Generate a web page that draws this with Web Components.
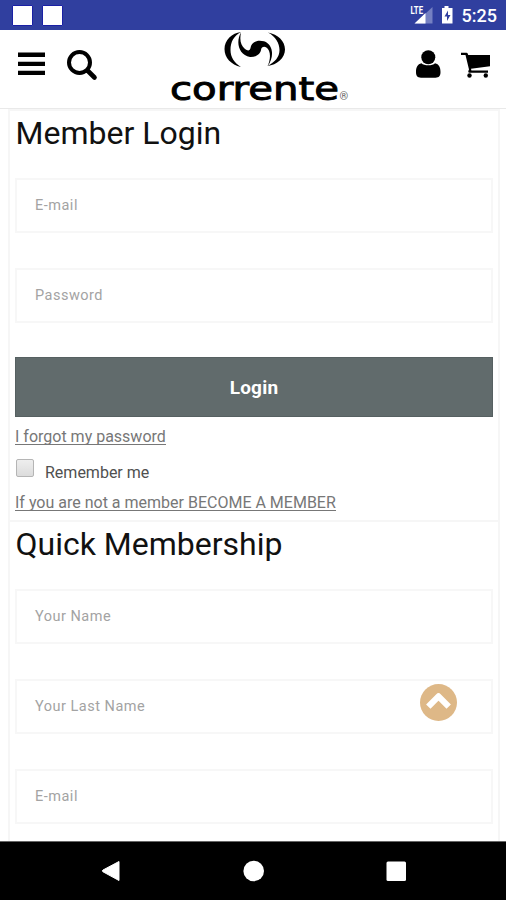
<!DOCTYPE html>
<html lang="en">
<head>
<meta charset="utf-8">
<title>Corrente – Member Login</title>
<style>
html,body{margin:0;height:100%;overflow:hidden;background:#fff;font-family:Roboto,"Liberation Sans",sans-serif}
</style>
</head>
<body>
<corrente-app></corrente-app>
<script>
const define = (name, html, setup) => customElements.define(name, class extends HTMLElement {
  connectedCallback() {
    if (this.shadowRoot) return;
    const t = document.createElement('template');
    t.innerHTML = html;
    this.attachShadow({ mode: 'open' }).append(t.content.cloneNode(true));
    if (setup) setup(this, this.shadowRoot);
  }
});

define('status-bar', `
<style>
:host{display:flex;box-sizing:border-box;height:30px;flex:none;background:#303f9f;color:#fff;align-items:center;padding:0 9px 0 12px}
.note{width:21px;height:21px;box-sizing:border-box;border:1px solid #1a20a5;background:#fff;margin-right:9px;border-radius:1px}
.gap{flex:1}
.clock{font-size:18px;font-weight:500;line-height:32px;height:30px}
svg{display:block;flex:none}
</style>
<span class="note"></span><span class="note"></span><span class="gap"></span>
<svg width="52" height="30" viewBox="0 0 52 30">
<path d="M22.500 7V23.500H5Z" fill="#7580c2"/><path d="M15.500 13V23.500H4.500Z" fill="#fff"/>
<text x="0.500" y="14" font-family="Roboto,sans-serif" font-size="10" font-weight="700" fill="#fff" textLength="12.500" lengthAdjust="spacingAndGlyphs">LTE</text>
<path d="M34.500 6h4v2h4v15.500H32V8h2.500Z" fill="#fff"/><path d="M38 10.500l-3.500 6h2.500v4.500l3.500-6h-2.500Z" fill="#303f9f"/>
</svg>
<span class="clock">5:25</span>`);

define('brand-logo', `
<style>:host{display:block;width:182px;height:76px}svg{display:block;overflow:visible}</style>
<svg width="182" height="78" viewBox="168 30 182 78">
<path d="M241 32C232 33 224.500 40 224.500 49C224.500 58 231 64.500 241 67C234 62.500 230.500 57 230.500 50C230.500 41.500 234 36 241 32Z"/>
<path d="M268 32.500C275.500 36.500 279.500 43 279.500 50C279.500 57 275 62 267.500 66C277 65 285 58 285 49.500C285 41 278 34.500 268 32.500Z"/>
<path d="M241 32.500C235.500 42 238.500 55 250 57C256.500 57.300 260.500 53.500 261 50C261.300 47 264 46 266 47.300C271 50 271 59 267.500 66.500C274.500 57 273.500 44.500 264 41.300C256 39 251 43.500 250.500 48C250 51 247.500 51 245 49C240.500 45 239.500 40 241 32.500Z"/>
<text x="170" y="100" font-family="'DejaVu Sans',sans-serif" font-size="31.500" stroke="#000" stroke-width=".9" textLength="169" lengthAdjust="spacingAndGlyphs">corrente</text>
<text x="339.500" y="100" font-family="Roboto,sans-serif" font-size="11" fill="#666">®</text>
</svg>`);

define('site-header', `
<style>
:host{display:flex;box-sizing:border-box;height:79px;flex:none;border-bottom:1px solid #e9e9e9;background:#fff;justify-content:space-between}
svg{display:block}
</style>
<svg width="110" height="76" viewBox="0 30 110 76">
<path d="M18 52.600h27v4.300H18zM18 61.700h27v4.300H18zM18 70.700h27v4.300H18z"/>
<circle cx="79.500" cy="62.500" r="10.500" fill="none" stroke="#000" stroke-width="4"/>
<path d="M87.500 70.500L94.500 77.500" stroke="#000" stroke-width="4.600" stroke-linecap="round"/>
</svg>
<brand-logo style="margin-left:58px"></brand-logo>
<svg width="106" height="76" viewBox="400 30 106 76" style="margin-left:50px">
<circle cx="428.300" cy="57.300" r="7"/><path d="M421.500 63.300C424 66 432.500 66 435 63.300C439 64 440.500 67.500 440.500 72C440.500 76 439 77.700 435.500 77.700H421C417.500 77.700 416 76 416 72C416 67.500 417.500 64 421.500 63.300Z"/>
<path d="M461 52.700h5.500c1.200 0 1.400 1 1.700 2.300H490v11.200L471 68.700l.4 1.800H488v2.300H469.500c-1.600-.1-1.500-1.300-.5-3.300L465.500 55H461Z"/>
<circle cx="469.500" cy="75.500" r="2.200"/><circle cx="485.800" cy="75.500" r="2.200"/>
</svg>`);

define('form-panel', `
<style>
:host{display:block;box-sizing:border-box;margin:0 6px 0 8px;border:solid #f6f6f6;border-width:2px 2px 0;padding:0 5px}
h2{margin:0;height:67px;line-height:45px;font-size:32px;font-weight:400;color:#111;white-space:nowrap;padding-left:.5px}
</style>
<h2></h2><slot></slot>`, (el, root) => {
  root.querySelector('h2').textContent = el.getAttribute('heading');
});

define('text-field', `
<style>
:host{display:block;box-sizing:border-box;height:55px;margin-bottom:35px;border:2px solid #f7f7f7;padding:0 18px;color:#a3a3a3;font-size:14.500px;line-height:52px;letter-spacing:.5px}
</style><slot></slot>`);

define('submit-button', `
<style>
:host{display:flex;box-sizing:border-box;height:60px;margin-top:-1px;align-items:center;justify-content:center;background:#616b6c;border:1px solid #566061;color:#fff;font-size:19px;font-weight:700;letter-spacing:.2px}
</style><slot></slot>`);

define('text-link', `
<style>
:host{display:block;color:#777;font-size:16px;line-height:20px;white-space:nowrap}
span{display:inline-block;height:18px;line-height:19px;border-bottom:1px solid #777;box-sizing:border-box}
</style><span><slot></slot></span>`);

define('check-row', `
<style>
:host{display:flex;height:30px;color:#505050;font-size:16px;line-height:38px}
i{box-sizing:border-box;width:18px;height:18px;margin:5px 11px 0 1px;border:1px solid #b5b5b5;border-radius:2px;background:linear-gradient(#eee,#dcdcdc)}
</style><i></i><span><slot></slot></span>`);

define('scroll-top', `
<style>:host{position:absolute;left:420px;top:684px;width:37px;height:37px}svg{display:block}</style>
<svg width="37" height="37" viewBox="0 0 37 37"><circle cx="18.500" cy="18.500" r="18.500" fill="#deb887"/><path d="M8.300 22.600L18.500 12.400L28.700 22.600" fill="none" stroke="#fff" stroke-width="6.200" stroke-linejoin="round"/></svg>`);

define('nav-bar', `
<style>:host{display:block;height:59px;flex:none;background:#000;box-sizing:border-box;border-top:1px solid #666}svg{display:block}</style>
<svg width="506" height="58" viewBox="0 842 506 58" fill="#fff"><path d="M119 861.500V880.500L103 871.800Q101.500 871 103 870Z" stroke="#fff" stroke-linejoin="round"/><circle cx="253.700" cy="871" r="10.300"/><rect x="386.500" y="861.500" width="19.500" height="19.500" rx="1.500"/></svg>`);

define('corrente-app', `
<style>
:host{display:flex;flex-direction:column;width:506px;height:900px;position:relative;overflow:hidden;background:#fff}
main{flex:1;min-height:0;overflow:hidden;display:flex;flex-direction:column}
form-panel{flex:none}
form-panel:last-child{flex:1}
.links{height:102.500px;padding-top:9.500px;box-sizing:border-box}
</style>
<status-bar></status-bar><site-header></site-header>
<main>
<form-panel heading="Member Login">
<text-field>E-mail</text-field><text-field>Password</text-field>
<submit-button>Login</submit-button>
<div class="links">
<text-link>I forgot my password</text-link>
<check-row style="margin-top:7px">Remember me</check-row>
<text-link style="margin-top:9.500px">If you are not a member BECOME A MEMBER</text-link>
</div>
</form-panel>
<form-panel heading="Quick Membership">
<text-field>Your Name</text-field><text-field>Your Last Name</text-field><text-field>E-mail</text-field>
</form-panel>
</main>
<nav-bar></nav-bar>
<scroll-top></scroll-top>`);
</script>
</body>
</html>
